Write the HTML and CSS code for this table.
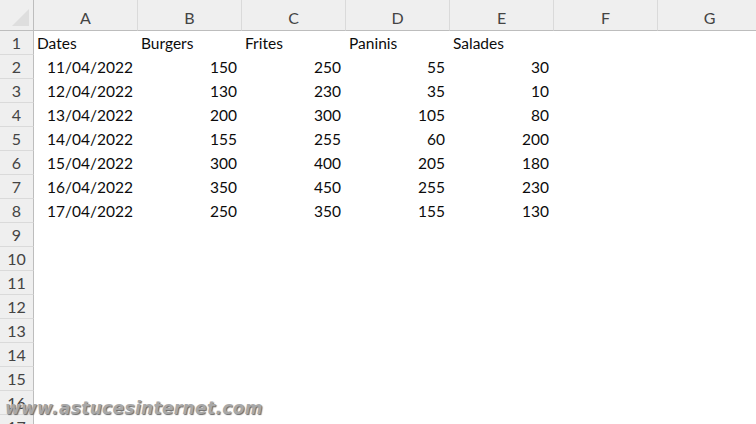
FILE: index.html
```html
<!DOCTYPE html>
<html lang="fr">
<head>
<meta charset="utf-8">
<title>Feuille</title>
<link rel="stylesheet" href="styles.css">
</head>
<body>
<div class="sheet">
  <div class="corner"><span class="tri"></span></div>
  <div class="colh">A</div><div class="colh">B</div><div class="colh">C</div><div class="colh">D</div><div class="colh">E</div><div class="colh">F</div><div class="colh">G</div>

  <div class="rowh">1</div><div class="c">Dates</div><div class="c">Burgers</div><div class="c">Frites</div><div class="c">Paninis</div><div class="c">Salades</div><div class="c"></div><div class="c"></div>
  <div class="rowh">2</div><div class="c n">11/04/2022</div><div class="c n">150</div><div class="c n">250</div><div class="c n">55</div><div class="c n">30</div><div class="c"></div><div class="c"></div>
  <div class="rowh">3</div><div class="c n">12/04/2022</div><div class="c n">130</div><div class="c n">230</div><div class="c n">35</div><div class="c n">10</div><div class="c"></div><div class="c"></div>
  <div class="rowh">4</div><div class="c n">13/04/2022</div><div class="c n">200</div><div class="c n">300</div><div class="c n">105</div><div class="c n">80</div><div class="c"></div><div class="c"></div>
  <div class="rowh">5</div><div class="c n">14/04/2022</div><div class="c n">155</div><div class="c n">255</div><div class="c n">60</div><div class="c n">200</div><div class="c"></div><div class="c"></div>
  <div class="rowh">6</div><div class="c n">15/04/2022</div><div class="c n">300</div><div class="c n">400</div><div class="c n">205</div><div class="c n">180</div><div class="c"></div><div class="c"></div>
  <div class="rowh">7</div><div class="c n">16/04/2022</div><div class="c n">350</div><div class="c n">450</div><div class="c n">255</div><div class="c n">230</div><div class="c"></div><div class="c"></div>
  <div class="rowh">8</div><div class="c n">17/04/2022</div><div class="c n">250</div><div class="c n">350</div><div class="c n">155</div><div class="c n">130</div><div class="c"></div><div class="c"></div>
  <div class="rowh">9</div><div class="c"></div><div class="c"></div><div class="c"></div><div class="c"></div><div class="c"></div><div class="c"></div><div class="c"></div>
  <div class="rowh">10</div><div class="c"></div><div class="c"></div><div class="c"></div><div class="c"></div><div class="c"></div><div class="c"></div><div class="c"></div>
  <div class="rowh">11</div><div class="c"></div><div class="c"></div><div class="c"></div><div class="c"></div><div class="c"></div><div class="c"></div><div class="c"></div>
  <div class="rowh">12</div><div class="c"></div><div class="c"></div><div class="c"></div><div class="c"></div><div class="c"></div><div class="c"></div><div class="c"></div>
  <div class="rowh">13</div><div class="c"></div><div class="c"></div><div class="c"></div><div class="c"></div><div class="c"></div><div class="c"></div><div class="c"></div>
  <div class="rowh">14</div><div class="c"></div><div class="c"></div><div class="c"></div><div class="c"></div><div class="c"></div><div class="c"></div><div class="c"></div>
  <div class="rowh">15</div><div class="c"></div><div class="c"></div><div class="c"></div><div class="c"></div><div class="c"></div><div class="c"></div><div class="c"></div>
  <div class="rowh">16</div><div class="c"></div><div class="c"></div><div class="c"></div><div class="c"></div><div class="c"></div><div class="c"></div><div class="c"></div>
  <div class="rowh">17</div><div class="c"></div><div class="c"></div><div class="c"></div><div class="c"></div><div class="c"></div><div class="c"></div><div class="c"></div>
</div>
<div class="watermark">www.astucesinternet.com</div>
</body>
</html>
```
FILE: styles.css
```css
html, body {
  margin: 0;
  padding: 0;
  background: #ffffff;
  overflow: hidden;
  width: 756px;
  height: 424px;
}
body {
  position: relative;
  font-family: Lato, "Liberation Sans", sans-serif;
}
.sheet {
  display: grid;
  grid-template-columns: 34px repeat(7, 104px);
  grid-template-rows: 31px;
  grid-auto-rows: 24px;
  width: 762px;
}
.corner {
  background: #efefef;
  border-right: 1px solid #bdbdbd;
  border-bottom: 1px solid #bdbdbd;
  position: relative;
}
.tri {
  position: absolute;
  right: 4px;
  bottom: 4px;
  width: 0;
  height: 0;
  border-left: 17px solid transparent;
  border-bottom: 17px solid #dedede;
}
.colh {
  background: #efefef;
  border-right: 1px solid #dadada;
  border-bottom: 1px solid #bdbdbd;
  color: #444;
  font-size: 16px;
  display: flex;
  align-items: center;
  justify-content: center;
  padding-top: 4px;
  box-sizing: border-box;
}
.rowh {
  background: #efefef;
  border-right: 1px solid #bdbdbd;
  border-bottom: 1px solid #dadada;
  color: #444;
  font-size: 16px;
  display: flex;
  align-items: center;
  justify-content: center;
  box-sizing: border-box;
}
.c {
  font-size: 15.5px;
  color: #0c0c0c;
  display: flex;
  align-items: center;
  padding: 0 5px 0 3px;
  box-sizing: border-box;
  white-space: nowrap;
}
.c.n {
  justify-content: flex-end;
}
.watermark {
  position: absolute;
  left: 5px;
  top: 398px;
  font-family: "DejaVu Sans", Verdana, sans-serif;
  font-weight: bold;
  font-style: italic;
  font-size: 17px;
  color: #a8a8a8;
  text-shadow: 1px 1px 1px #6a6a6a;
  letter-spacing: 0.35px;
  white-space: nowrap;
}
```
